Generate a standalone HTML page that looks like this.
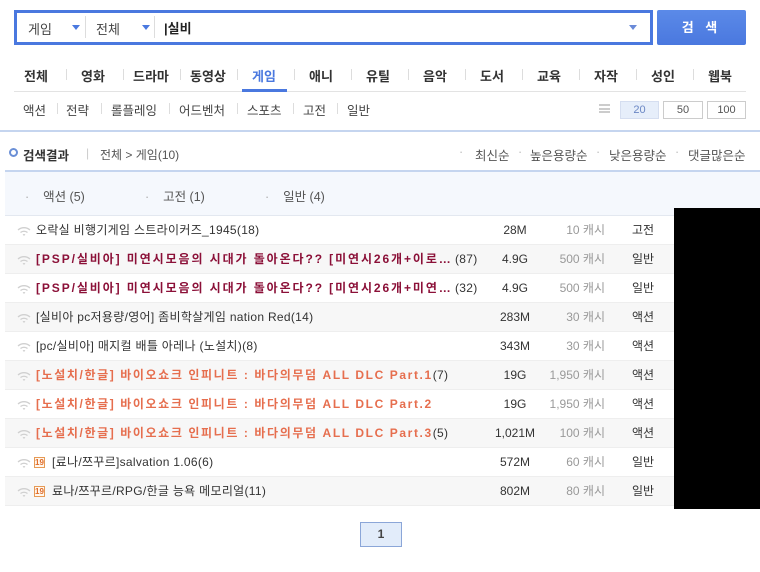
<!DOCTYPE html>
<html><head><meta charset="utf-8"><style>
*{margin:0;padding:0;box-sizing:border-box}
body{width:760px;height:572px;background:#fff;font-family:"Liberation Sans","Noto Sans CJK KR","NanumGothic",sans-serif;font-size:12px;color:#333;position:relative;overflow:hidden}
.a{position:absolute}
.sb{left:14px;top:10px;width:639px;height:35px;border:3px solid #4a78df;background:#fff}
.btn{left:657px;top:10px;width:89px;height:35px;background:linear-gradient(#5b8ae8,#4a78df);color:#fff;font-weight:bold;font-size:13px;text-align:center;line-height:35px;letter-spacing:4px;border-radius:2px}
.tri{width:0;height:0;border-left:4px solid transparent;border-right:4px solid transparent;border-top:5px solid #4a78df}
.nav span{position:absolute;top:66px;font-size:13px;font-weight:bold;color:#333}
.sub span{position:absolute;top:100px;font-size:12.5px;color:#444}
.sep{position:absolute;width:1px;height:11px;background:#ddd}
.row{position:absolute;left:5px;width:669px;height:29px;border-bottom:1px solid #eee;line-height:28px;font-size:12px}
.row.g{background:#f7f7f7}
.t{position:absolute;left:31px;white-space:nowrap;letter-spacing:0.3px}
.sz{position:absolute;left:470px;width:80px;text-align:center}
.cs{position:absolute;left:500px;width:100px;text-align:right;color:#999}
.gn{position:absolute;left:615px;width:46px;text-align:center}
.wf{position:absolute;left:12px;top:9px}
.r{color:#8b1038;font-weight:bold;letter-spacing:1.9px}
.o{color:#e66e4e;font-weight:bold;letter-spacing:1.6px}
.b19{position:absolute;left:29px;top:9px;width:11px;height:11px;border:1px solid #e69a55;color:#e06d2a;font-size:8px;line-height:9px;text-align:center;font-weight:bold;background:#fff7ee}
.pg{border:1px solid #ccc;color:#555;font-size:11px;text-align:center;line-height:16px;height:18px;top:101px}
.so{position:absolute;top:145px;font-size:12.5px;color:#555;white-space:nowrap}
</style></head><body>
<div class="a sb"></div>
<div class="a" style="left:28px;top:19px;font-size:13px;color:#444">게임</div>
<div class="a tri" style="left:72px;top:25px"></div>
<div class="a" style="left:85px;top:16px;width:1px;height:22px;background:#ddd"></div>
<div class="a" style="left:96px;top:19px;font-size:13px;color:#444">전체</div>
<div class="a tri" style="left:142px;top:25px"></div>
<div class="a" style="left:154px;top:16px;width:1px;height:22px;background:#ddd"></div>
<div class="a" style="left:164px;top:18px;font-size:13px;font-weight:bold;color:#222">|실비</div>
<div class="a tri" style="left:629px;top:25px;border-top-color:#6a8ad8"></div>
<div class="a btn">검 색</div>
<div class="nav">
<span style="left:24px">전체</span><span style="left:81px">영화</span><span style="left:133px">드라마</span><span style="left:190px">동영상</span><span style="left:252px;color:#4a78df">게임</span><span style="left:309px">애니</span><span style="left:366px">유틸</span><span style="left:423px">음악</span><span style="left:480px">도서</span><span style="left:537px">교육</span><span style="left:594px">자작</span><span style="left:651px">성인</span><span style="left:708px">웹북</span>
</div>
<div class="sep" style="left:66px;top:69px"></div><div class="sep" style="left:123px;top:69px"></div><div class="sep" style="left:180px;top:69px"></div><div class="sep" style="left:237px;top:69px"></div><div class="sep" style="left:294px;top:69px"></div><div class="sep" style="left:351px;top:69px"></div><div class="sep" style="left:408px;top:69px"></div><div class="sep" style="left:465px;top:69px"></div><div class="sep" style="left:522px;top:69px"></div><div class="sep" style="left:579px;top:69px"></div><div class="sep" style="left:636px;top:69px"></div><div class="sep" style="left:693px;top:69px"></div>
<div class="a" style="left:14px;top:91px;width:732px;height:1px;background:#e3e3e3"></div>
<div class="a" style="left:242px;top:89px;width:45px;height:3px;background:#4a78df"></div>
<div class="sub">
<span style="left:23px">액션</span><span style="left:66px">전략</span><span style="left:111px">롤플레잉</span><span style="left:179px">어드벤처</span><span style="left:247px">스포츠</span><span style="left:303px">고전</span><span style="left:347px">일반</span>
</div>
<div class="sep" style="left:57px;top:103px"></div><div class="sep" style="left:101px;top:103px"></div><div class="sep" style="left:169px;top:103px"></div><div class="sep" style="left:237px;top:103px"></div><div class="sep" style="left:293px;top:103px"></div><div class="sep" style="left:337px;top:103px"></div>
<div class="a" style="left:599px;top:104px;width:11px;height:9px;border-top:2px solid #ccc;border-bottom:2px solid #ccc"><div style="margin-top:1.5px;height:2px;background:#ccc"></div></div>
<div class="a pg" style="left:620px;width:39px;background:#e6eefa;color:#6b87c4;border-color:#d5def0">20</div>
<div class="a pg" style="left:663px;width:40px">50</div>
<div class="a pg" style="left:707px;width:39px">100</div>
<div class="a" style="left:0;top:130px;width:760px;height:2px;background:#c5d5ef"></div>
<div class="a" style="left:9px;top:148px;width:9px;height:9px;border:2px solid #6a8fd6;border-radius:50%"></div>
<div class="a" style="left:23px;top:145px;font-weight:bold;font-size:12.5px;color:#333">검색결과</div>
<div class="a" style="left:86px;top:146px;color:#ccc">|</div>
<div class="a" style="left:100px;top:146px;color:#555">전체 &gt; 게임(10)</div>
<span class="so" style="left:459px;color:#bbb">·</span><span class="so" style="left:475px">최신순</span>
<span class="so" style="left:518px;color:#bbb">·</span><span class="so" style="left:530px">높은용량순</span>
<span class="so" style="left:596px;color:#bbb">·</span><span class="so" style="left:609px">낮은용량순</span>
<span class="so" style="left:675px;color:#bbb">·</span><span class="so" style="left:688px">댓글많은순</span>
<div class="a" style="left:5px;top:170px;width:755px;height:2px;background:#c5d5ef"></div>
<div class="a" style="left:5px;top:172px;width:755px;height:44px;background:#f5f8fd;border-bottom:1px solid #e3e8f0"></div>
<div class="a" style="left:25px;top:186px;color:#555;font-size:12.5px"><span style="color:#aaa">·</span>&nbsp;&nbsp;&nbsp;&nbsp;액션 (5)</div>
<div class="a" style="left:145px;top:186px;color:#555;font-size:12.5px"><span style="color:#aaa">·</span>&nbsp;&nbsp;&nbsp;&nbsp;고전 (1)</div>
<div class="a" style="left:265px;top:186px;color:#555;font-size:12.5px"><span style="color:#aaa">·</span>&nbsp;&nbsp;&nbsp;&nbsp;일반 (4)</div>

<svg width="0" height="0" style="position:absolute"><defs><g id="w"><path d="M1 5a9 9 0 0 1 12 0M3.5 7.5a5.5 5.5 0 0 1 7 0M6 10a2 2 0 0 1 2 0" fill="none" stroke="#d0d0d0" stroke-width="1.3"/></g></defs></svg>

<div class="row" style="top:216px"><svg class="wf" width="14" height="11"><use href="#w"/></svg><span class="t">오락실 비행기게임 스트라이커즈_1945(18)</span><span class="sz">28M</span><span class="cs">10 캐시</span><span class="gn">고전</span></div>
<div class="row g" style="top:245px"><svg class="wf" width="14" height="11"><use href="#w"/></svg><span class="t"><span class="r">[PSP/실비아] 미연시모음의 시대가 돌아온다?? [미연시26개+이로…</span><span style="position:absolute;left:419px">(87)</span></span><span class="sz">4.9G</span><span class="cs">500 캐시</span><span class="gn">일반</span></div>
<div class="row" style="top:274px"><svg class="wf" width="14" height="11"><use href="#w"/></svg><span class="t"><span class="r">[PSP/실비아] 미연시모음의 시대가 돌아온다?? [미연시26개+미연…</span><span style="position:absolute;left:419px">(32)</span></span><span class="sz">4.9G</span><span class="cs">500 캐시</span><span class="gn">일반</span></div>
<div class="row g" style="top:303px"><svg class="wf" width="14" height="11"><use href="#w"/></svg><span class="t">[실비아 pc저용량/영어] 좀비학살게임 nation Red(14)</span><span class="sz">283M</span><span class="cs">30 캐시</span><span class="gn">액션</span></div>
<div class="row" style="top:332px"><svg class="wf" width="14" height="11"><use href="#w"/></svg><span class="t">[pc/실비아] 매지컬 배틀 아레나 (노설치)(8)</span><span class="sz">343M</span><span class="cs">30 캐시</span><span class="gn">액션</span></div>
<div class="row g" style="top:361px"><svg class="wf" width="14" height="11"><use href="#w"/></svg><span class="t"><span class="o">[노설치/한글] 바이오쇼크 인피니트 : 바다의무덤 ALL DLC Part.1</span>(7)</span><span class="sz">19G</span><span class="cs">1,950 캐시</span><span class="gn">액션</span></div>
<div class="row" style="top:390px"><svg class="wf" width="14" height="11"><use href="#w"/></svg><span class="t"><span class="o">[노설치/한글] 바이오쇼크 인피니트 : 바다의무덤 ALL DLC Part.2</span></span><span class="sz">19G</span><span class="cs">1,950 캐시</span><span class="gn">액션</span></div>
<div class="row g" style="top:419px"><svg class="wf" width="14" height="11"><use href="#w"/></svg><span class="t"><span class="o">[노설치/한글] 바이오쇼크 인피니트 : 바다의무덤 ALL DLC Part.3</span>(5)</span><span class="sz">1,021M</span><span class="cs">100 캐시</span><span class="gn">액션</span></div>
<div class="row" style="top:448px"><svg class="wf" width="14" height="11"><use href="#w"/></svg><span class="b19">19</span><span class="t" style="left:47px">[료나/쯔꾸르]salvation 1.06(6)</span><span class="sz">572M</span><span class="cs">60 캐시</span><span class="gn">일반</span></div>
<div class="row g" style="top:477px"><svg class="wf" width="14" height="11"><use href="#w"/></svg><span class="b19">19</span><span class="t" style="left:47px">료나/쯔꾸르/RPG/한글 능욕 메모리얼(11)</span><span class="sz">802M</span><span class="cs">80 캐시</span><span class="gn">일반</span></div>
<div class="a" style="left:674px;top:208px;width:86px;height:301px;background:#000"></div>
<div class="a" style="left:360px;top:522px;width:42px;height:25px;background:#e2ecfa;border:1px solid #8ba6d8;text-align:center;line-height:23px;font-weight:bold;color:#444">1</div>
</body></html>
